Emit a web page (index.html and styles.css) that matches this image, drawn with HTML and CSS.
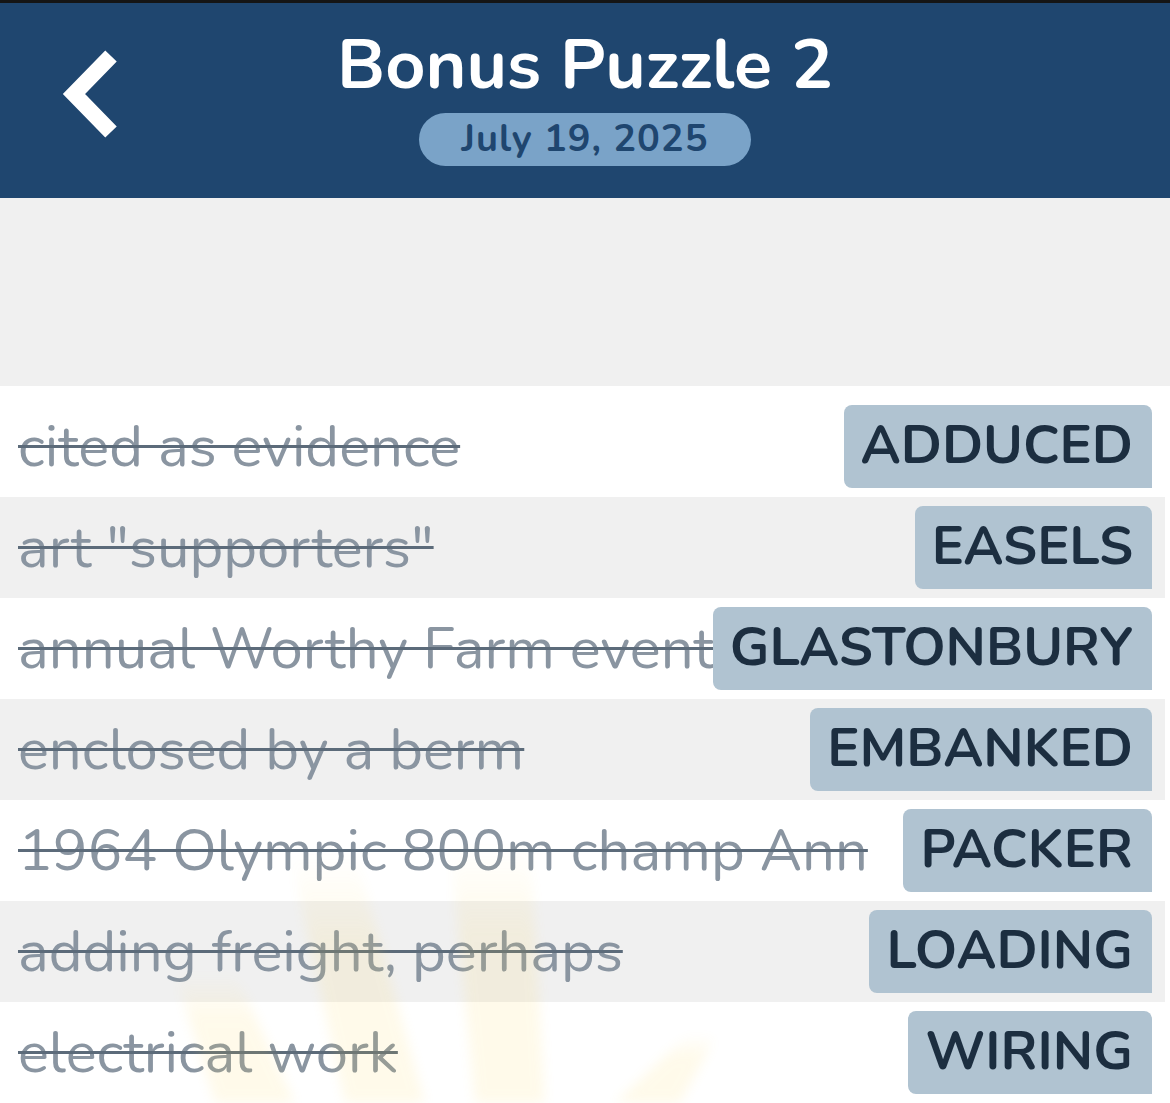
FILE: index.html
```html
<!DOCTYPE html>
<html lang="en">
<head>
    <meta charset="UTF-8">
    <meta name="viewport" content="width=device-width, initial-scale=1.0">
    <title>Bonus Puzzle 2</title>
    <link rel="stylesheet" href="styles.css">
</head>
<body>
    <header class="topbar">
        <button class="back" aria-label="Back">
            <svg width="60" height="90" viewBox="0 0 60 90">
                <polyline points="52,7 15,45 52,83" fill="none" stroke="#fff" stroke-width="16" stroke-linejoin="miter"/>
            </svg>
        </button>
        <h1 class="title">Bonus Puzzle 2</h1>
        <span class="date">July 19, 2025</span>
    </header>

    <div class="board"></div>

    <ul class="clues">
        <li class="clue"><span class="hint">cited as evidence</span><span class="answer">ADDUCED</span></li>
        <li class="clue"><span class="hint">art "supporters"</span><span class="answer">EASELS</span></li>
        <li class="clue"><span class="hint">annual Worthy Farm event</span><span class="answer">GLASTONBURY</span></li>
        <li class="clue"><span class="hint">enclosed by a berm</span><span class="answer">EMBANKED</span></li>
        <li class="clue"><span class="hint">1964 Olympic 800m champ Ann</span><span class="answer">PACKER</span></li>
        <li class="clue"><span class="hint">adding freight, perhaps</span><span class="answer">LOADING</span></li>
        <li class="clue"><span class="hint">electrical work</span><span class="answer">WIRING</span></li>
    </ul>

    <!-- faint sunburst left over from the solved animation -->
    <svg class="rays" width="1170" height="260" viewBox="0 0 1170 260">
        <defs>
            <linearGradient id="ray" x1="0" y1="0" x2="0" y2="1">
                <stop offset="0" stop-color="#ffd54a" stop-opacity="0"/>
                <stop offset="0.35" stop-color="#ffd54a" stop-opacity="1"/>
                <stop offset="1" stop-color="#ffd54a" stop-opacity="1"/>
            </linearGradient>
            <filter id="soft"><feGaussianBlur stdDeviation="6"/></filter>
        </defs>
        <g fill="url(#ray)" filter="url(#soft)">
            <polygon points="290,10 355,10 425,260 345,260"/>
            <polygon points="450,0 530,0 545,260 475,260"/>
            <polygon points="175,130 235,130 295,260 215,260"/>
            <polygon points="690,190 715,195 680,260 615,260"/>
        </g>
    </svg>
</body>
</html>
```

FILE: styles.css
```css
body {
    margin: 0;
    font-family: "Nunito", "Open Sans", sans-serif;
    background: #fff;
    height: 1103px;
    overflow: hidden;
    position: relative;
}
.topbar {
    position: relative;
    height: 195px;
    border-top: 3px solid #151515;
    background-color: #1f466f;
    display: flex;
    flex-direction: column;
    align-items: center;
}
.back {
    position: absolute;
    left: 59px;
    top: 46px;
    padding: 0;
    border: none;
    background: none;
    cursor: pointer;
}
.title {
    margin: 24px 0 0;
    font-size: 70px;
    line-height: 76px;
    font-weight: 700;
    color: #fff;
}
.date {
    margin-top: 10px;
    padding: 0 43px 1px;
    height: 52px;
    line-height: 52px;
    border-radius: 27px;
    background-color: #7aa3c8;
    color: #1f466f;
    font-size: 38px;
    font-weight: 700;
    letter-spacing: 1px;
}
.board {
    height: 188px;
    background-color: #f0f0f0;
}
.clues {
    list-style: none;
    margin: 0;
    padding: 10px 0 0;
    width: 1165px;
}
.clue {
    display: flex;
    align-items: center;
    justify-content: space-between;
    gap: 8px;
    height: 101px;
    padding: 0 13px 0 18px;
    box-sizing: border-box;
}
.clue:nth-child(even) {
    background-color: #f0f0f0;
}
.hint {
    min-width: 0;
    font-size: 58px;
    color: #8a95a1;
    white-space: nowrap;
    text-decoration: line-through;
    text-decoration-color: #5c6b7a;
    text-decoration-thickness: 3px;
}
.answer {
    flex-shrink: 0;
    height: 80px;
    line-height: 80px;
    padding: 0 19px 3px 17px;
    border-radius: 8px 8px 0 8px;
    background-color: #b0c3d1;
    color: #1c2e40;
    font-size: 54px;
    font-weight: 700;
    white-space: nowrap;
}
.rays {
    position: absolute;
    left: 0;
    bottom: 0;
    opacity: 0.11;
    pointer-events: none;
}
```
